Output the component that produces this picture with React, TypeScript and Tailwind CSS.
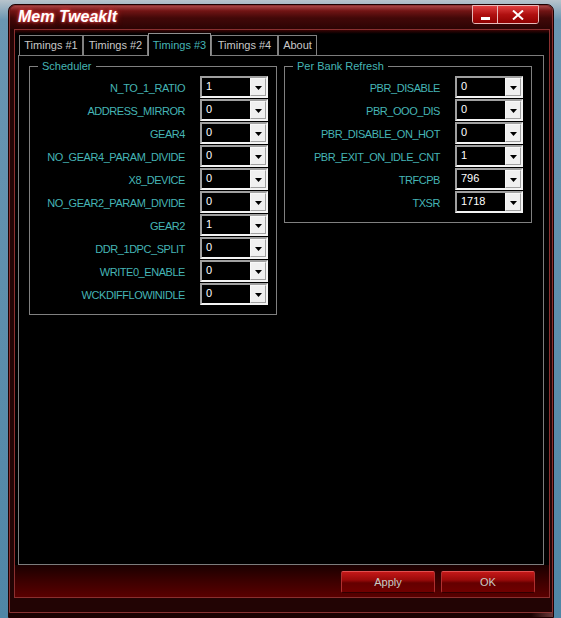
import React from 'react';

const scheduler: [string, string][] = [
  ['N_TO_1_RATIO', '1'],
  ['ADDRESS_MIRROR', '0'],
  ['GEAR4', '0'],
  ['NO_GEAR4_PARAM_DIVIDE', '0'],
  ['X8_DEVICE', '0'],
  ['NO_GEAR2_PARAM_DIVIDE', '0'],
  ['GEAR2', '1'],
  ['DDR_1DPC_SPLIT', '0'],
  ['WRITE0_ENABLE', '0'],
  ['WCKDIFFLOWINIDLE', '0'],
];

const perBank: [string, string][] = [
  ['PBR_DISABLE', '0'],
  ['PBR_OOO_DIS', '0'],
  ['PBR_DISABLE_ON_HOT', '0'],
  ['PBR_EXIT_ON_IDLE_CNT', '1'],
  ['TRFCPB', '796'],
  ['TXSR', '1718'],
];

const tabs = [
  { name: 'Timings #1', w: 'w-[64px]' },
  { name: 'Timings #2', w: 'w-[65px]' },
  { name: 'Timings #3', w: 'w-[63px]', active: true },
  { name: 'Timings #4', w: 'w-[67px]' },
  { name: 'About', w: 'w-[39px]' },
];

function Combo({ value }: { value: string }) {
  return (
    <div className="flex h-[22px] w-[68px] shrink-0 border-2 border-t-[#a0a0a0] border-l-[#a0a0a0] border-r-[#f4f4f4] border-b-[#f4f4f4] bg-black">
      <span className="flex-1 pl-[4px] text-[11px] leading-[17px] text-white">{value}</span>
      <div className="flex w-[16px] items-center justify-center border border-t-[#f8f8f8] border-l-[#f8f8f8] border-r-[#a0a0a0] border-b-[#a0a0a0] bg-[#f0f0f0] pt-[2px]">
        <svg width="7" height="4" viewBox="0 0 7 4">
          <path d="M0 0h7L3.5 4z" fill="#000" />
        </svg>
      </div>
    </div>
  );
}

function Group({ title, rows }: { title: string; rows: [string, string][] }) {
  return (
    <fieldset className="w-[248px] border border-[#808080] pr-[8px] pb-[9px] pt-[3px]">
      <legend className="ml-[8px] px-[4px] text-[11px] leading-[13px] text-[#45b5b5]">{title}</legend>
      <div className="flex flex-col gap-[1px]">
        {rows.map(([label, value]) => (
          <div key={label} className="flex items-center justify-end gap-[15px]">
            <span className="pt-[2px] text-[11px] tracking-[-0.45px] text-[#45b5b5]">{label}</span>
            <Combo value={value} />
          </div>
        ))}
      </div>
    </fieldset>
  );
}

function RedButton({ label }: { label: string }) {
  return (
    <div className="flex h-[22px] w-[94px] items-center justify-center rounded-[2px] border border-t-[#e05050] border-l-[#b03030] border-r-[#b03030] border-b-[#300000] bg-[linear-gradient(to_bottom,#c41818_0%,#9a0a0a_40%,#640000_55%,#700000_100%)] text-[11px] text-[#c8ccc4]">
      {label}
    </div>
  );
}

export default function App() {
  return (
    <div
      className="h-[618px] w-[561px] overflow-hidden bg-[linear-gradient(to_bottom,#b8c4cc_0px,#6a96b2_20px,#4f86a6_100%)] pl-[8px] pt-[4px]"
      style={{ fontFamily: '"Liberation Sans", Arial, sans-serif' }}
    >
      <div className="h-[614px] w-[546px] rounded-t-[7px] border border-[#1e0000] bg-[linear-gradient(to_right,#1a0202_0%,#1a0202_96%,#6a3a3a_100%)]">
        <div className="flex h-[608px] flex-col rounded-t-[6px] border border-[#8a3434] bg-[#220404]">
          {/* Title bar */}
          <div className="flex h-[23px] shrink-0 items-start rounded-t-[5px] bg-[linear-gradient(to_bottom,#a84444_0px,#701414_5px,#420808_12px,#2c0404_23px)] pl-[8px] pr-[13px]">
            <span className="mt-[1px] text-[16px] font-bold italic leading-[20px] text-white [text-shadow:0_0_3px_#ff6060,0_0_6px_#d02020]">
              Mem TweakIt
            </span>
            <div className="-mt-[1px] ml-auto flex h-[19px] overflow-hidden rounded-b-[3px] border border-[#e8b8b8]">
              <div className="flex w-[25px] items-end justify-center border-r border-[#e8b8b8] bg-[linear-gradient(to_bottom,#e04040_0%,#b01010_50%,#900000_100%)] pb-[3px]">
                <div className="h-[3px] w-[9px] bg-white" />
              </div>
              <div className="flex w-[40px] items-center justify-center bg-[linear-gradient(to_bottom,#e04040_0%,#b01010_50%,#900000_100%)]">
                <svg width="12" height="10" viewBox="0 0 12 10">
                  <path d="M1 0.5L11 9.5M11 0.5L1 9.5" stroke="#fff" strokeWidth="2" />
                </svg>
              </div>
            </div>
          </div>

          {/* Client frame */}
          <div className="ml-[4px] mr-[2px] flex h-[569px] shrink-0 flex-col border border-[#8a3030] bg-[linear-gradient(to_bottom,#3a0404_0px,#000_4px)]">
            {/* Tabs */}
            <div className="mt-[3px] flex h-[22px] items-end pl-[4px] text-[11px]">
              {tabs.map((t) =>
                t.active ? (
                  <div
                    key={t.name}
                    className={`${t.w} relative z-10 -mb-[1px] flex h-[23px] items-center justify-center border border-b-0 border-[#909090] bg-black text-[#45b5b5]`}
                  >
                    {t.name}
                  </div>
                ) : (
                  <div
                    key={t.name}
                    className={`${t.w} flex h-[20px] items-center justify-center border border-b-0 border-[#808080] bg-black text-[#c8c8c8]`}
                  >
                    {t.name}
                  </div>
                )
              )}
            </div>

            {/* Panel */}
            <div className="ml-[3px] h-[510px] w-[526px] border border-[#7c7c7c] bg-black">
              <div className="flex items-start gap-[7px] pl-[10px] pt-[4px]">
                <Group title="Scheduler" rows={scheduler} />
                <Group title="Per Bank Refresh" rows={perBank} />
              </div>
            </div>

            {/* Button strip */}
            <div className="flex flex-1 items-start justify-end gap-[6px] bg-[linear-gradient(to_bottom,#1a0000_0%,#3c0000_50%,#5a0000_100%)] pr-[14px] pt-[6px]">
              <RedButton label="Apply" />
              <RedButton label="OK" />
            </div>
          </div>
        </div>
      </div>
    </div>
  );
}
